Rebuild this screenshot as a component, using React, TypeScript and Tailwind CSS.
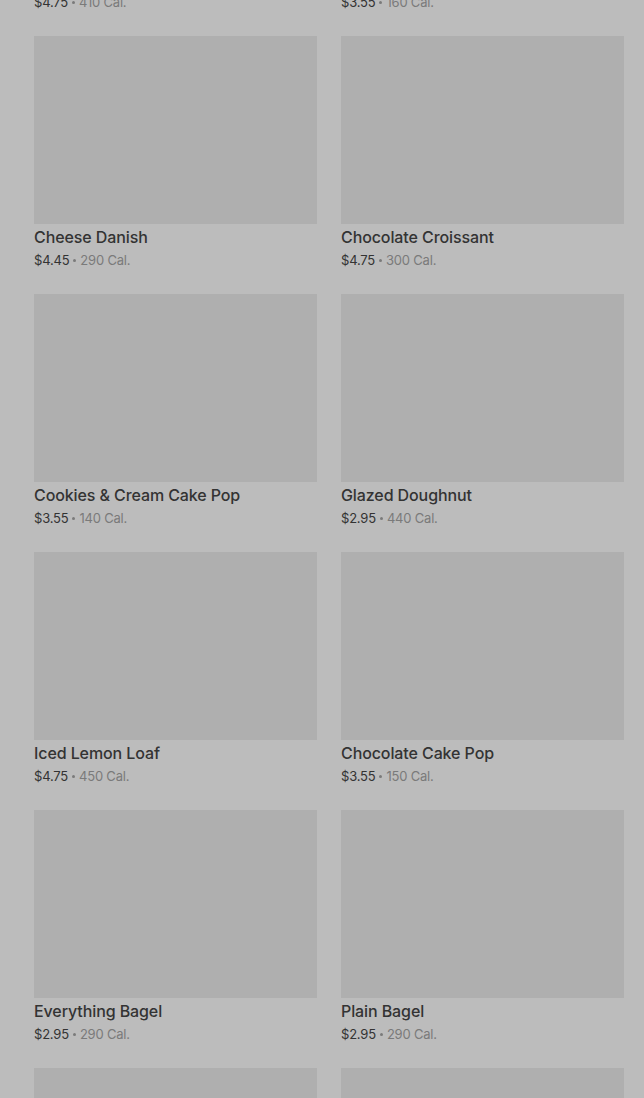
const items = [
  { name: "Butter Croissant", price: "$4.75", cal: "410 Cal." },
  { name: "Vanilla Bean Scone", price: "$3.55", cal: "160 Cal." },
  { name: "Cheese Danish", price: "$4.45", cal: "290 Cal." },
  { name: "Chocolate Croissant", price: "$4.75", cal: "300 Cal." },
  { name: "Cookies & Cream Cake Pop", price: "$3.55", cal: "140 Cal." },
  { name: "Glazed Doughnut", price: "$2.95", cal: "440 Cal." },
  { name: "Iced Lemon Loaf", price: "$4.75", cal: "450 Cal." },
  { name: "Chocolate Cake Pop", price: "$3.55", cal: "150 Cal." },
  { name: "Everything Bagel", price: "$2.95", cal: "290 Cal." },
  { name: "Plain Bagel", price: "$2.95", cal: "290 Cal." },
  { name: "Banana Nut Bread", price: "$3.95", cal: "420 Cal." },
  { name: "Blueberry Muffin", price: "$3.45", cal: "360 Cal." },
];

function MenuCard({ name, price, cal }: { name: string; price: string; cal: string }) {
  return (
    <div className="flex flex-col">
      <div className="h-[188px] bg-[#afafaf]" />
      <div className="mt-[3px] h-5 text-[16px] leading-5 font-medium tracking-[-0.1px] text-[#333333]">{name}</div>
      <div className="mt-[3px] h-5 flex items-center text-[13px] leading-5 tracking-[-0.2px] text-[#7a7a7a]">
        <span className="text-[#333333]">{price}</span>
        <span className="mx-[4px] w-[3px] h-[3px] rounded-full bg-[#7a7a7a]" />
        <span>{cal}</span>
      </div>
    </div>
  );
}

export default function App() {
  return (
    <div
      className="h-[1098px] overflow-hidden bg-[#bcbcbc]"
      style={{ fontFamily: "Inter, 'Noto Sans', sans-serif" }}
    >
      <div className="mt-[-222px] pl-[34px] pr-[20px] grid grid-cols-2 gap-x-6 gap-y-6">
        {items.map((it) => (
          <MenuCard key={it.name} {...it} />
        ))}
      </div>
    </div>
  );
}
